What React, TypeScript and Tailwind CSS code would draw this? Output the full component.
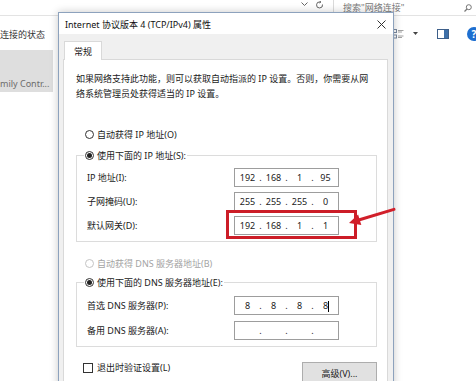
import { Fragment } from "react";

const Radio = ({ checked, disabled }: { checked?: boolean; disabled?: boolean }) => (
  <span
    className={`flex h-[9px] w-[9px] shrink-0 items-center justify-center rounded-full border ${
      disabled ? "border-[#c4c4c4]" : "border-[#333333]"
    }`}
  >
    {checked && <span className="h-[5px] w-[5px] rounded-full bg-[#222222]" />}
  </span>
);

const IpBox = ({ parts, caret }: { parts: string[]; caret?: boolean }) => (
  <div className="flex h-[19px] w-[105px] items-center border border-[#9d9d9d] bg-white px-[2px] text-[#222222]">
    {parts.map((p, i) => (
      <Fragment key={i}>
        {i > 0 && <span className="w-[5px] text-center">.</span>}
        <span className="w-[21px] text-center">
          {p}
          {caret && i === 3 && (
            <span className="-mr-px inline-block h-[11px] w-px bg-black align-middle" />
          )}
        </span>
      </Fragment>
    ))}
  </div>
);

const Row = ({ label, parts, caret }: { label: string; parts: string[]; caret?: boolean }) => (
  <div className="grid grid-cols-[147px_105px] items-center pl-[10px]">
    <span>{label}</span>
    <IpBox parts={parts} caret={caret} />
  </div>
);

const App = () => {
  return (
    <div className="relative h-[381px] w-[476px] overflow-hidden bg-white font-['Noto_Sans','Noto_Sans_CJK_SC',sans-serif] text-[9px] leading-[15px] text-[#1a1a1a]">
      {/* explorer address bar */}
      <div className="flex h-[16px] border-b border-[#e3e3e3]">
        <div className="flex flex-1 items-start justify-end gap-[8px] pr-[9px] pt-[1px] text-[#666666]">
          <svg width="7" height="5" viewBox="0 0 7 5" className="mt-[1px]">
            <path d="M0.5 0.5 L3.5 3.5 L6.5 0.5" fill="none" stroke="#666" strokeWidth="1" />
          </svg>
          <svg width="8" height="8" viewBox="0 0 8 8">
            <path d="M6.5 3.5 A3 3 0 1 1 4 1" fill="none" stroke="#666" strokeWidth="1" />
            <path d="M3.5 0 L5 1 L3.5 2" fill="none" stroke="#666" strokeWidth="1" />
          </svg>
        </div>
        <div className="flex w-[143px] items-center border-l border-[#dadada] pl-[9px] pr-[4px] text-[#7a7a7a]">
          <span>搜索"网络连接"</span>
          <svg width="8" height="8" viewBox="0 0 8 8" className="ml-auto">
            <circle cx="4.8" cy="3.2" r="2.5" fill="none" stroke="#777" strokeWidth="1" />
            <path d="M3 5 L0.5 7.5" stroke="#777" strokeWidth="1.2" />
          </svg>
        </div>
      </div>

      {/* explorer toolbar */}
      <div className="flex h-[34px] items-center">
        <span className="pt-[2px] text-[#333333]">连接的状态</span>
        <div className="ml-auto flex items-center gap-[9px] pt-[1px]">
          <svg width="11" height="10" viewBox="0 0 11 10">
            <rect x="0.5" y="0.5" width="3" height="3" fill="none" stroke="#7a8aa0" />
            <rect x="0.5" y="6" width="3" height="3" fill="none" stroke="#7a8aa0" />
            <path d="M5 1.5 H10.5 M5 3 H9 M5 7 H10.5 M5 8.5 H9" stroke="#8a8a8a" strokeWidth="0.8" />
          </svg>
          <svg width="5" height="3" viewBox="0 0 5 3" className="mr-[10px]">
            <path d="M0 0 H5 L2.5 3 Z" fill="#444" />
          </svg>
          <div className="flex h-[10px] w-[12px] border border-[#3d5f8a] bg-white">
            <span className="ml-auto h-full w-[4px] bg-[#3d6fa8]" />
          </div>
          <div className="-mr-[5px] ml-[9px] flex h-[14px] w-[14px] items-center justify-center rounded-full bg-[#1e6fd0] text-[10px] font-bold leading-none text-white">
            ?
          </div>
        </div>
      </div>

      {/* explorer content */}
      <div className="flex">
        <div className="w-[53px]">
          <div className="flex h-[42px] items-end bg-[#dedede] pb-[1px] text-[#6c6c6c]">
            <span className="whitespace-nowrap">mily Contr...</span>
          </div>
        </div>
      </div>

      {/* dialog */}
      <div className="absolute left-[58px] top-[12px] flex h-[380px] w-[336px] flex-col border border-[#8da2bd] bg-[#f0f0f0] shadow-[0_0_8px_rgba(0,0,0,0.22)]">
        <div className="flex h-[21px] items-center justify-between bg-white pl-[6px] pr-[7px] pt-[1px]">
          <span className="text-[#111111]">Internet 协议版本 4 (TCP/IPv4) 属性</span>
          <svg width="9" height="9" viewBox="0 0 9 9">
            <path d="M0.5 0.5 L8.5 8.5 M8.5 0.5 L0.5 8.5" stroke="#333" strokeWidth="1" />
          </svg>
        </div>

        <div className="flex flex-1 flex-col pl-[4px] pr-[5px] pt-[7px]">
          <div className="relative z-10 -mb-px ml-[1px] flex h-[19px] w-[38px] items-center justify-center border border-b-0 border-[#d9d9d9] bg-white">
            常规
          </div>
          <div className="flex-1 border border-[#d9d9d9] bg-white pl-[12px] pr-[10px] pt-[11px]">
            <p className="whitespace-nowrap">
              如果网络支持此功能，则可以获取自动指派的 IP 设置。否则，你需要从网
              <br />
              络系统管理员处获得适当的 IP 设置。
            </p>

            <div className="ml-[9px] mt-[26px] flex items-center gap-[3px]">
              <Radio />
              <span>自动获得 IP 地址(O)</span>
            </div>

            <fieldset className="mt-[6px] border border-[#dcdcdc] pb-[6px]">
              <legend className="ml-[7px] flex items-center gap-[3px] px-[1px]">
                <Radio checked />
                <span>使用下面的 IP 地址(S):</span>
              </legend>
              <div className="flex flex-col gap-[5px] pt-[5px]">
                <Row label="IP 地址(I):" parts={["192", "168", "1", "95"]} />
                <Row label="子网掩码(U):" parts={["255", "255", "255", "0"]} />
                <Row label="默认网关(D):" parts={["192", "168", "1", "1"]} />
              </div>
            </fieldset>

            <div className="ml-[9px] mt-[14px] flex items-center gap-[3px] text-[#a3a3a3]">
              <Radio disabled />
              <span>自动获得 DNS 服务器地址(B)</span>
            </div>

            <fieldset className="mt-[4px] border border-[#dcdcdc] pb-[6px]">
              <legend className="ml-[7px] flex items-center gap-[3px] px-[1px]">
                <Radio checked />
                <span>使用下面的 DNS 服务器地址(E):</span>
              </legend>
              <div className="flex flex-col gap-[6px] pt-[6px]">
                <Row label="首选 DNS 服务器(P):" parts={["8", "8", "8", "8"]} caret />
                <Row label="备用 DNS 服务器(A):" parts={["", "", "", ""]} />
              </div>
            </fieldset>

            <div className="mt-[13px] flex items-start justify-between">
              <div className="ml-[7px] flex items-center gap-[4px]">
                <span className="h-[10px] w-[10px] border border-[#333333] bg-white" />
                <span>退出时验证设置(L)</span>
              </div>
              <div className="mt-[2px] flex h-[22px] w-[75px] items-center justify-center border border-[#adadad] bg-[#e1e1e1]">
                高级(V)...
              </div>
            </div>
          </div>
        </div>
      </div>

      {/* annotation */}
      <div className="absolute left-[226px] top-[210px] h-[29px] w-[131px] border-[3px] border-[#cc1d27]" />
      <svg width="56" height="30" viewBox="0 0 56 30" className="absolute left-[340px] top-[200px]">
        <path d="M54 9.4 L19.5 19.8" stroke="#d11f2a" strokeWidth="3" strokeLinecap="round" />
        <path d="M9 23 L18.1 14.6 L21.3 25 Z" fill="#d11f2a" />
      </svg>
    </div>
  );
};

export default App;
